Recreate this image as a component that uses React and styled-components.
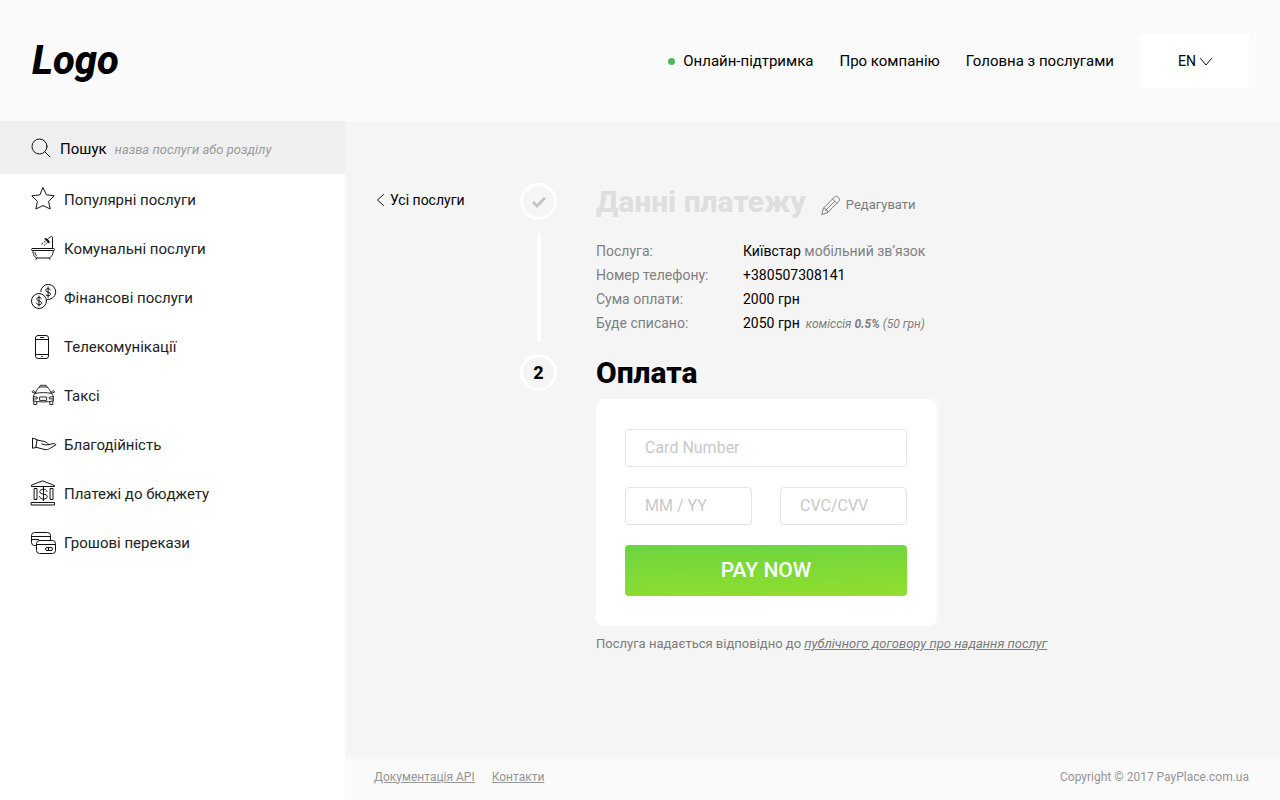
import React from "react";
import styled, { createGlobalStyle, css } from "styled-components";

const GlobalStyle = createGlobalStyle`
  *, *::before, *::after { box-sizing: border-box; }
  body {
    margin: 0;
    font-family: Roboto, "Liberation Sans", sans-serif;
    font-size: 15px;
    color: #000;
    background: #f5f5f5;
  }
  input, button, select { font-family: inherit; }
`;

const Page = styled.div`
  min-height: 100vh;
  display: flex;
  flex-direction: column;
`;

const Header = styled.header`
  display: flex;
  align-items: center;
  justify-content: space-between;
  padding: 34px 31px 33px 32px;
  background: #fafafa;
`;

const Logo = styled.a`
  font-size: 40px;
  line-height: 54px;
  font-weight: 800;
  font-style: italic;
  color: #000;
  text-decoration: none;
`;

const TopNav = styled.nav`
  display: flex;
  align-items: center;
  gap: 26px;
`;

const TopLink = styled.a`
  display: flex;
  align-items: center;
  gap: 8px;
  line-height: 20px;
  color: #000;
  text-decoration: none;
`;

const OnlineDot = styled.span`
  width: 7px;
  height: 7px;
  border-radius: 50%;
  background: #4cb860;
`;

const Language = styled.label`
  display: grid;
  grid-template-columns: 1fr;
  align-items: center;
  background: #fff;
  svg {
    grid-area: 1 / 1;
    justify-self: end;
    margin: 2px 37px 0 0;
    pointer-events: none;
  }
`;

const LanguageSelect = styled.select`
  grid-area: 1 / 1;
  appearance: none;
  width: 109px;
  height: 54px;
  padding: 0 38px;
  border: 0;
  background: transparent;
  font-size: 14px;
  color: #000;
`;

const Body = styled.div`
  flex: 1;
  display: flex;
`;

const Sidebar = styled.aside`
  flex: 0 0 345px;
  background: #fff;
`;

const Search = styled.form`
  display: flex;
  align-items: center;
  height: 53px;
  padding: 2px 31px 0;
  background: #efefef;
`;

const SearchLabel = styled.label`
  display: flex;
  align-items: center;
  gap: 9px;
  line-height: 20px;
`;

const SearchInput = styled.input`
  flex: 1;
  min-width: 0;
  height: 32px;
  padding: 2px 8px 0;
  border: 0;
  outline: 0;
  background: transparent;
  font-size: 13px;
  &::placeholder {
    color: #9b9b9b;
    font-style: italic;
    opacity: 1;
  }
`;

const Menu = styled.ul`
  list-style: none;
  margin: 0;
  padding: 1px 0 0;
`;

const MenuLink = styled.a`
  display: flex;
  align-items: center;
  gap: 7px;
  height: 49px;
  padding: 0 31px;
  color: #222;
  text-decoration: none;
`;

const Icon = styled.svg.attrs({ "aria-hidden": true })`
  flex: none;
  display: block;
  fill: none;
  stroke: ${(p) => p.$color || "#111"};
  stroke-width: ${(p) => p.$weight || 1};
  stroke-linecap: round;
  stroke-linejoin: round;
  overflow: visible;
`;

const Content = styled.div`
  flex: 1;
  min-width: 0;
  display: flex;
  flex-direction: column;
`;

const Main = styled.main`
  flex: 1;
  display: flex;
  align-items: flex-start;
  padding: 62px 31px 40px;
`;

const BackLink = styled.a`
  flex: 0 0 144px;
  display: flex;
  align-items: center;
  gap: 5px;
  height: 34px;
  font-size: 14px;
  color: #000;
  text-decoration: none;
`;

const Steps = styled.ol`
  flex: 1;
  list-style: none;
  margin: 0;
  padding: 0;
`;

const Step = styled.li`
  display: flex;
  gap: 39px;
`;

const Rail = styled.div`
  display: flex;
  flex-direction: column;
  align-items: center;
`;

const Marker = styled.span`
  display: flex;
  align-items: center;
  justify-content: center;
  width: 37px;
  height: 37px;
  border: 3px solid #fff;
  border-radius: 50%;
  font-size: 18px;
  font-weight: 800;
`;

const Connector = styled.span`
  flex: 1;
  width: 4px;
  margin: 13px 0;
  background: #fff;
`;

const StepBody = styled.section`
  flex: 1;
  min-width: 0;
`;

const StepHead = styled.div`
  display: flex;
  align-items: center;
  gap: 15px;
`;

const Title = styled.h2`
  margin: 0;
  font-size: 30px;
  line-height: 38px;
  font-weight: 800;
  color: ${(p) => (p.$done ? "#dedede" : "#000")};
`;

const EditButton = styled.button`
  display: flex;
  align-items: center;
  gap: 5px;
  padding: 5px 0 0;
  border: 0;
  background: none;
  font-size: 13px;
  line-height: 20px;
  color: #7b7b7b;
  cursor: pointer;
`;

const Details = styled.dl`
  display: grid;
  grid-template-columns: 147px 1fr;
  margin: 18px 0;
  font-size: 14px;
  line-height: 24px;
  dt { color: #7f7f7f; }
  dd { margin: 0; }
`;

const Muted = styled.span`
  color: #7f7f7f;
`;

const Fee = styled.em`
  margin-left: 6px;
  font-size: 12px;
  color: #7f7f7f;
`;

const Card = styled.form`
  display: grid;
  grid-template-columns: 1fr 1fr;
  gap: 20px 28px;
  max-width: 341px;
  margin-top: 7px;
  padding: 30px 30px 30px 29px;
  border-radius: 8px;
  background: #fff;
`;

const wide = css`
  grid-column: 1 / -1;
`;

const Field = styled.input`
  width: 100%;
  min-width: 0;
  height: 38px;
  padding: 0 19px 2px;
  border: 1px solid #e4e4e4;
  border-radius: 4px;
  outline: 0;
  background: #fff;
  font-size: 16px;
  ${(p) => p.$wide && wide}
  &::placeholder {
    color: #c8c8c8;
    opacity: 1;
  }
`;

const PayButton = styled.button`
  ${wide}
  height: 51px;
  padding: 0 0 1px;
  border: 0;
  border-radius: 4px;
  background: linear-gradient(178deg, #6dd53f, #92de2e);
  font-size: 21px;
  font-weight: 500;
  color: #fff;
  cursor: pointer;
`;

const Terms = styled.p`
  margin: 8px 0 0;
  font-size: 13px;
  line-height: 20px;
  color: #7b7b7b;
  a {
    color: inherit;
    font-style: italic;
  }
`;

const Footer = styled.footer`
  display: flex;
  align-items: center;
  justify-content: space-between;
  height: 43px;
  padding: 0 31px 4px 29px;
  background: #fafafa;
  font-size: 12px;
  color: #959595;
`;

const FooterLinks = styled.nav`
  display: flex;
  gap: 17px;
  a { color: inherit; }
`;

const MenuIcon = ({ children }) => (
  <Icon width="26" height="26" viewBox="0 0 26 26">{children}</Icon>
);

const services = [
  ["Популярні послуги", (
    <path d="M12 .8l3.4 7 7.9 1-5.7 5.5 1.6 7.7-7.2-3.5L4.900 22l1.500-7.700L.8 8.800l7.800-1z" />
  )],
  ["Комунальні послуги", (
    <>
      <rect x=".5" y="12.500" width="23" height="2" rx="1" />
      <path d="M1.800 14.500c.4 4.500 1.700 7.200 4.700 7.500h11c3-.3 4.400-3 4.800-7.500M6 22l-1 1.500M18 22l1 1.500M4 16.500c.3 1.800.9 2.900 1.800 3.500M21.500 12.500V1.500c0-.8-.8-1.200-1.700-.8l-2.300 1.600" />
      <path d="M14 2.800c1.600-.9 4.600 1.700 4.200 3.900z" fill="#111" />
      <path d="M14 5.300l-1 .9M16.200 6.500l-1 1M11.700 7.200l-1 .8M14 8.700l-.8.6" />
    </>
  )],
  ["Фінансові послуги", (
    <>
      <circle cx="8" cy="16" r="7.500" />
      <path d="M9.700 6.500a7.500 7.500 0 1 1 6.500 7.900" />
      <path d="M10.300 13.800c-.4-1-1.300-1.400-2.300-1.400-1.300 0-2.300.6-2.300 1.800 0 2.400 4.800 1.200 4.800 3.700 0 1.200-1.100 1.800-2.500 1.800-1.200 0-2.200-.5-2.500-1.600M8 11v10" />
      <path d="M19.300 4.900c-.4-1-1.200-1.400-2.200-1.400-1.300 0-2.300.6-2.300 1.800 0 2.400 4.700 1.200 4.700 3.700 0 1.200-1.100 1.800-2.400 1.800-.8 0-1.500-.3-2-.8M17.100 2v10.200" />
    </>
  )],
  ["Телекомунікації", (
    <>
      <rect x="4.500" y="1.500" width="13" height="23" rx="2.500" />
      <path d="M4.500 5.500h13M4.500 20.500h13M9.500 3.500h3M10.700 22.500h.6" />
    </>
  )],
  ["Таксі", (
    <g strokeWidth=".9">
      <path d="M8.500 4l1-1.700h5.600l1 1.700M8.300 4h8c1.700 1.400 2.600 3.300 3.900 6M8.300 4C6.600 5.400 5.700 7.300 4.400 10" />
      <path d="M4.600 9.400L3 7.800c-1.300-.3-2 .3-1.700 1.500l2.500.7M20 9.400l1.600-1.600c1.300-.3 2 .3 1.700 1.500l-2.500.7" />
      <path d="M4 10.500c5-1.200 11.600-1.200 16.600 0 1.300 1 1.700 2.500 1.700 4.500v3c-6 1.200-14 1.200-20 0v-3c0-2 .4-3.500 1.700-4.500z" />
      <path d="M9 14h6.600v3.400H9zM2.500 13.500l3.800.8v1.600H2.400M22.100 13.500l-3.800.8v1.600h3.900M2.800 18.200v3.300h3v-2.800M21.800 18.200v3.300h-3v-2.800" />
    </g>
  )],
  ["Благодійність", (
    <path d="M1.500 6.500v9.800l3.300-.8 1.200-7.500zM6 8l7.500 1.500c2.200.8 3.300 1.500 3.800 3.200-2.200.5-4.600 0-6.600-.7M17.300 12.700l4.500-1c1.600-.3 2.900.3 3.200 1l-6.500 4c-1.500.9-2.800 1.200-4.500.9L4.800 15.200" />
  )],
  ["Платежі до бюджету", (
    <path d="M12 0l11.500 4.500v1H.5v-1zM3.500 7.500h2.500v11h-2.500zM19.500 7.500h2.500v11h-2.500zM.5 21.500h23v2.500H.5zM16 10.500c-.5-1.600-1.900-2.300-3.500-2.300-2 0-3.700.9-3.700 2.500 0 3.400 7.500 1.500 7.500 4.900 0 1.500-1.700 2.500-3.800 2.500-1.900 0-3.700-.8-4-2.600M12.500 6.500v13" />
  )],
  ["Грошові перекази", (
    <>
      <path d="M5.500 15.500h-2a3 3 0 0 1-3-3v-7a3 3 0 0 1 3-3h13a3 3 0 0 1 3 3v5M.5 6.500h19M.5 9.500h7" />
      <rect x="5.500" y="10.500" width="19" height="13" rx="3" />
      <path d="M5.500 14.500h19" />
      <rect x="14.500" y="17.500" width="7" height="3" rx="1.500" />
      <path d="M17.500 17.500v3" />
    </>
  )],
];

export default function App() {
  return (
    <Page>
      <GlobalStyle />
      <Header>
        <Logo href="#">Logo</Logo>
        <TopNav>
          <TopLink href="#support"><OnlineDot />Онлайн-підтримка</TopLink>
          <TopLink href="#about">Про компанію</TopLink>
          <TopLink href="#home">Головна з послугами</TopLink>
          <Language>
            <LanguageSelect aria-label="Мова" defaultValue="EN">
              <option>EN</option>
            </LanguageSelect>
            <Icon width="12" height="8" viewBox="0 0 12 8"><path d="M.5 .5L6 7l5.500-6.500" /></Icon>
          </Language>
        </TopNav>
      </Header>
      <Body>
        <Sidebar>
          <Search role="search">
            <SearchLabel htmlFor="search">
              <Icon width="20" height="20" viewBox="0 0 20 20">
                <circle cx="8.500" cy="7.500" r="7.500" />
                <path d="M14 13l5 5" />
              </Icon>
              Пошук
            </SearchLabel>
            <SearchInput id="search" type="text" placeholder="назва послуги або розділу" />
          </Search>
          <nav>
            <Menu>
              {services.map(([name, drawing]) => (
                <li key={name}>
                  <MenuLink href="#service"><MenuIcon>{drawing}</MenuIcon>{name}</MenuLink>
                </li>
              ))}
            </Menu>
          </nav>
        </Sidebar>
        <Content>
          <Main>
            <BackLink href="#services">
              <Icon width="9" height="12" viewBox="0 0 9 12"><path d="M7.500 .5L1.500 6l6 5.500" /></Icon>
              Усі послуги
            </BackLink>
            <Steps>
              <Step>
                <Rail>
                  <Marker>
                    <Icon $color="#c4c4c4" $weight={3} width="15" height="12" viewBox="0 0 15 12">
                      <path strokeLinecap="butt" d="M2 6l4 4L14 1.800" />
                    </Icon>
                  </Marker>
                  <Connector />
                </Rail>
                <StepBody>
                  <StepHead>
                    <Title $done>Данні платежу</Title>
                    <EditButton type="button">
                      <Icon $color="#7b7b7b" width="20" height="20" viewBox="0 0 20 20">
                        <path d="M.8 19.200l1.700-6L13.700 1.800c2-2 6.300 2 4.300 4.300L6.700 17.500zM2.500 13.200c2 .2 4 2.200 4.200 4.300M11.500 4l4.300 4.300M4.600 15.400l9-9" />
                      </Icon>
                      Редагувати
                    </EditButton>
                  </StepHead>
                  <Details>
                    <dt>Послуга:</dt>
                    <dd>Київстар <Muted>мобільний зв’язок</Muted></dd>
                    <dt>Номер телефону:</dt>
                    <dd>+380507308141</dd>
                    <dt>Сума оплати:</dt>
                    <dd>2000 грн</dd>
                    <dt>Буде списано:</dt>
                    <dd>2050 грн<Fee>коміссія <b>0.5%</b> (50 грн)</Fee></dd>
                  </Details>
                </StepBody>
              </Step>
              <Step>
                <Rail><Marker>2</Marker></Rail>
                <StepBody>
                  <Title>Оплата</Title>
                  <Card>
                    <Field $wide type="text" aria-label="Card Number" placeholder="Card Number" />
                    <Field type="text" aria-label="MM / YY" placeholder="MM / YY" />
                    <Field type="text" aria-label="CVC/CVV" placeholder="CVC/CVV" />
                    <PayButton type="button">PAY NOW</PayButton>
                  </Card>
                  <Terms>
                    Послуга надається відповідно до <a href="#terms">публічного договору про надання послуг</a>
                  </Terms>
                </StepBody>
              </Step>
            </Steps>
          </Main>
          <Footer>
            <FooterLinks>
              <a href="#api">Документація API</a>
              <a href="#contacts">Контакти</a>
            </FooterLinks>
            <span>Copyright © 2017 PayPlace.com.ua</span>
          </Footer>
        </Content>
      </Body>
    </Page>
  );
}
